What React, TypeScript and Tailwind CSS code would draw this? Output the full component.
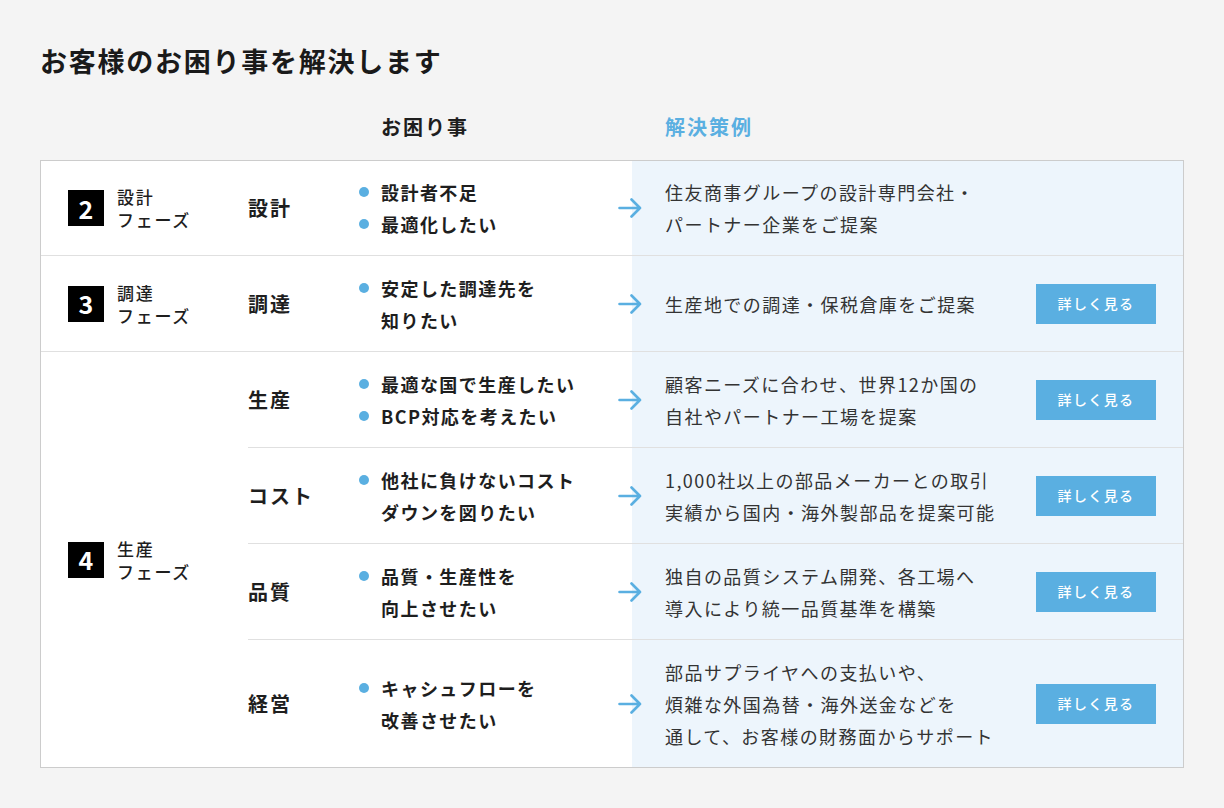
import React from "react";

const FONT = { fontFamily: '"Noto Sans CJK JP", "Noto Sans", sans-serif' };

interface Item {
  cat: string;
  problems: string[][];
  solution: string[];
  button: boolean;
  h: string;
}

interface Phase {
  num: string;
  label: string;
  items: Item[];
}

// heights are border-box: rows after the first in a group carry their own top border
const phases: Phase[] = [
  {
    num: "2",
    label: "設計",
    items: [
      {
        cat: "設計",
        problems: [["設計者不足"], ["最適化したい"]],
        solution: ["住友商事グループの設計専門会社・", "パートナー企業をご提案"],
        button: false,
        h: "h-[94px]",
      },
    ],
  },
  {
    num: "3",
    label: "調達",
    items: [
      {
        cat: "調達",
        problems: [["安定した調達先を", "知りたい"]],
        solution: ["生産地での調達・保税倉庫をご提案"],
        button: true,
        h: "h-[95px]",
      },
    ],
  },
  {
    num: "4",
    label: "生産",
    items: [
      {
        cat: "生産",
        problems: [["最適な国で生産したい"], ["BCP対応を考えたい"]],
        solution: ["顧客ニーズに合わせ、世界12か国の", "自社やパートナー工場を提案"],
        button: true,
        h: "h-[95px]",
      },
      {
        cat: "コスト",
        problems: [["他社に負けないコスト", "ダウンを図りたい"]],
        solution: ["1,000社以上の部品メーカーとの取引", "実績から国内・海外製部品を提案可能"],
        button: true,
        h: "h-[96px]",
      },
      {
        cat: "品質",
        problems: [["品質・生産性を", "向上させたい"]],
        solution: ["独自の品質システム開発、各工場へ", "導入により統一品質基準を構築"],
        button: true,
        h: "h-[96px]",
      },
      {
        cat: "経営",
        problems: [["キャシュフローを", "改善させたい"]],
        solution: [
          "部品サプライヤへの支払いや、",
          "煩雑な外国為替・海外送金などを",
          "通して、お客様の財務面からサポート",
        ],
        button: true,
        h: "h-[128px]",
      },
    ],
  },
];

function Arrow() {
  return (
    <svg width="24" height="20" viewBox="0 0 24 20" fill="none" className="-ml-[14px] shrink-0">
      <path
        d="M1.5 10 H22 M13.5 1.5 L22 10 L13.5 18.5"
        stroke="#5aafe1"
        strokeWidth="2.6"
        strokeLinecap="round"
        strokeLinejoin="round"
      />
    </svg>
  );
}

function Lines({ lines }: { lines: string[] }) {
  return (
    <>
      {lines.map((line, j) => (
        <React.Fragment key={j}>
          {j > 0 && <br />}
          {line}
        </React.Fragment>
      ))}
    </>
  );
}

function SubRow({ item, first }: { item: Item; first: boolean }) {
  return (
    <div className={`flex ${item.h} ${first ? "" : "border-t border-[#e0e0e0]"}`}>
      <div className="w-[111px] flex items-center text-[20px] font-bold tracking-[0.1em] text-[#1e1e1e]">
        {item.cat}
      </div>
      <div className="w-[273px] flex flex-col justify-center">
        {item.problems.map((p, i) => (
          <div key={i} className="flex items-start">
            <span className="w-[10px] h-[10px] rounded-full bg-[#5aafe1] mt-[11px] mr-[12px] shrink-0" />
            <p className="text-[18px] font-bold leading-[32px] tracking-[0.08em] text-[#1e1e1e]">
              <Lines lines={p} />
            </p>
          </div>
        ))}
      </div>
      <div className="flex-1 flex items-center bg-[#edf5fc] pr-[27px]">
        <Arrow />
        <p className="ml-[23px] flex-1 text-[18px] leading-[32px] tracking-[0.08em] text-[#333]">
          <Lines lines={item.solution} />
        </p>
        {item.button && (
          <button className="w-[120px] h-[40px] bg-[#5aafe1] text-white text-[14px] font-medium tracking-[0.1em]">
            詳しく見る
          </button>
        )}
      </div>
    </div>
  );
}

function PhaseGroup({ phase, first }: { phase: Phase; first: boolean }) {
  return (
    <div className={`flex ${first ? "" : "border-t border-[#e0e0e0]"}`}>
      <div className="w-[207px] flex items-center pl-[27px]">
        <div className="w-[36px] h-[36px] bg-black text-white flex items-center justify-center text-[25px] font-bold leading-none">
          {phase.num}
        </div>
        <div className="ml-[13px] text-[17px] font-medium leading-[23px] tracking-[0.1em] text-[#1e1e1e]">
          {phase.label}
          <br />
          フェーズ
        </div>
      </div>
      <div className="flex-1 flex flex-col">
        {phase.items.map((item, i) => (
          <SubRow key={i} item={item} first={i === 0} />
        ))}
      </div>
    </div>
  );
}

export default function App() {
  return (
    <div className="min-h-[808px] bg-[#f4f4f4] px-[40px] pt-[44px] pb-[40px]" style={FONT}>
      <h1 className="text-[27px] font-bold leading-[34px] tracking-[0.065em] text-[#1a1a1a]">
        お客様のお困り事を解決します
      </h1>
      <div className="flex items-center h-[42px] mt-[28px] mb-[12px]">
        <div className="w-[341px]" />
        <div className="w-[284px] text-[20px] font-bold tracking-[0.1em] text-[#1e1e1e]">お困り事</div>
        <div className="text-[20px] font-bold tracking-[0.1em] text-[#5aafe1]">解決策例</div>
      </div>
      <div className="w-[1144px] border border-[#cccccc] bg-white flex flex-col">
        {phases.map((phase, i) => (
          <PhaseGroup key={phase.num} phase={phase} first={i === 0} />
        ))}
      </div>
    </div>
  );
}
